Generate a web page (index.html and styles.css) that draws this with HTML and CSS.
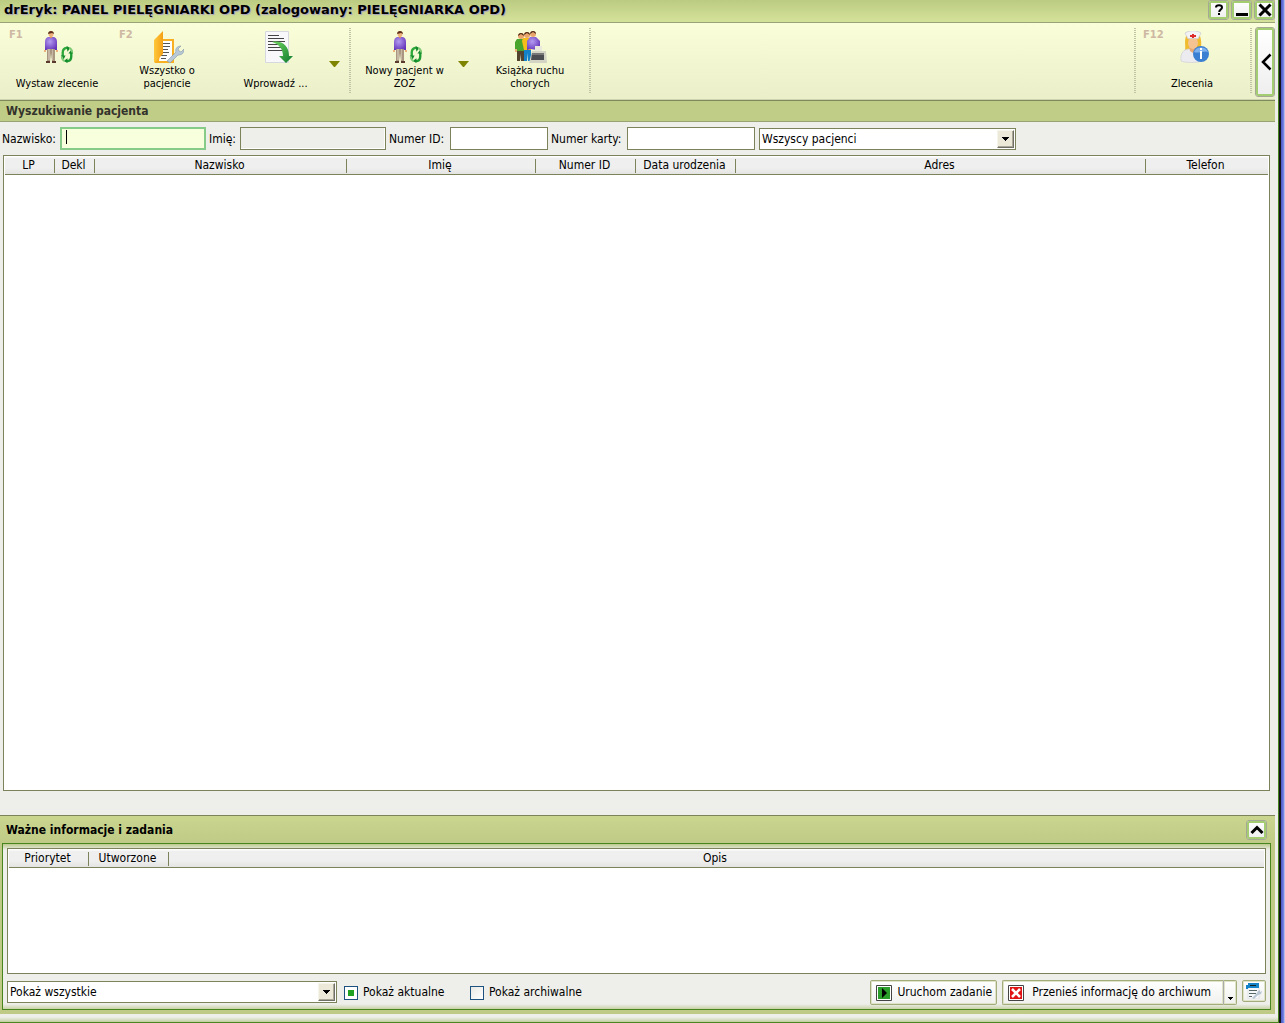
FILE: index.html
```html
<!DOCTYPE html>
<html lang="pl">
<head>
<meta charset="utf-8">
<title>drEryk: PANEL PIELĘGNIARKI OPD</title>
<link rel="stylesheet" href="styles.css">
</head>
<body>
<svg class="defs" aria-hidden="true">
  <defs>
    <radialGradient id="shirt" cx=".4" cy=".35" r=".7"><stop offset="0" stop-color="#b49cf0"/><stop offset="1" stop-color="#6536bc"/></radialGradient>
    <linearGradient id="folder" x1="0" y1="0" x2="1" y2="0"><stop offset="0" stop-color="#ffc83c"/><stop offset="1" stop-color="#f5a014"/></linearGradient>
    <linearGradient id="green" x1="0" y1="0" x2="1" y2="1"><stop offset="0" stop-color="#6fd45f"/><stop offset="1" stop-color="#0d7a2e"/></linearGradient>
    <symbol id="person" viewBox="0 0 14 32">
      <path d="M3 17h8v13H8l-1-8-1 8H3z" fill="#a89680"/>
      <path d="M4 18h2v11H4zM8 18h1v11H8z" fill="#c6b8a4"/>
      <path d="M2 30h4v2H2zM8 30h4v2H8z" fill="#5a3a2e"/>
      <path d="M4 6h6q3 1 3 5v8h-2v-1H3v1H1v-8q0-4 3-5z" fill="url(#shirt)"/>
      <path d="M0 19h2v2H0zM12 19h2v2h-2z" fill="#eeb07c"/>
      <path d="M6 4h2v3H6z" fill="#d98f58"/>
      <ellipse cx="7" cy="3" rx="2.500" ry="3" fill="#eeb07c"/>
      <path d="M4 3c0-4 6-4 6 0L8 2z" fill="#5b2e18"/>
    </symbol>
    <symbol id="refresh" viewBox="0 0 13 18">
      <path d="M2 11V7c0-3 2-5 5-5" fill="none" stroke="#2fa83c" stroke-width="2.500"/>
      <path d="M11 7v4c0 3-2 5-5 5" fill="none" stroke="#1d9a32" stroke-width="2.500"/>
      <path d="M6 0l4 2-3 4zM0 10h5l-2 4zM8 8l3-4 2 4zM7 13v5l-4-2z" fill="#138a2b"/>
      <path d="M9 2c2 1 3 3 3 5" fill="none" stroke="#7ccb74" stroke-width="2"/>
      <path d="M1 11c0 2 1 4 3 5" fill="none" stroke="#7ccb74" stroke-width="2"/>
    </symbol>
  </defs>
</svg>

<div class="window">
  <header class="titlebar">
    <h1>drEryk: PANEL PIELĘGNIARKI OPD (zalogowany: PIELĘGNIARKA OPD)</h1>
    <div class="window-buttons">
      <button class="frame-button" type="button" aria-label="Pomoc"><svg width="14" height="14" viewBox="0 0 14 14"><path d="M4 4.500C4 1.500 10 1.500 10 4.500C10 6.500 7.200 6.500 7.200 9" fill="none" stroke="#000" stroke-width="2"/><path d="M6 10h2v2H6z"/></svg></button>
      <button class="frame-button" type="button" aria-label="Minimalizuj"><svg width="14" height="14" viewBox="0 0 14 14"><path d="M1 10h12v3H1z"/></svg></button>
      <button class="frame-button" type="button" aria-label="Zamknij"><svg width="14" height="14" viewBox="0 0 14 14"><path d="M1.500 1.500l11 11M12.500 1.500l-11 11" stroke="#000" stroke-width="3"/></svg></button>
    </div>
  </header>

  <nav class="toolbar">
    <button class="tool" type="button">
      <span class="hotkey">F1</span>
      <svg class="tool-icon" width="32" height="32" viewBox="0 0 32 32"><use href="#person" x="2" y="0" width="14" height="32"/><use href="#refresh" x="18" y="15" width="14" height="17"/></svg>
      <span class="tool-label">Wystaw zlecenie</span>
    </button>
    <button class="tool" type="button">
      <span class="hotkey">F2</span>
      <svg class="tool-icon" width="32" height="32" viewBox="0 0 32 32">
        <path d="M3 8h19v24H3z" fill="#f8b022"/><path d="M10 10h10v20H7z" fill="#fff"/>
        <path d="M11 12.500h7M11 15.500h7M10 18.500h6M10 21.500h7M9 24.500h6M9 27.500h5" stroke="#555" stroke-width="1"/>
        <path d="M2 9l9-9v23l-9 9z" fill="url(#folder)"/>
        <path d="M15 30l9-9c-1-3 1-6 5-6l-3 3 1 2 2 1 3-3c0 5-3 6-6 6l-8 8z" fill="#b9c9d8" stroke="#8297aa" stroke-width=".6"/>
      </svg>
      <span class="tool-label">Wszystko o pacjencie</span>
    </button>
    <button class="tool tool-split" type="button">
      <svg class="tool-icon" width="32" height="32" viewBox="0 0 32 32">
        <path d="M4.500.500h23v31h-23z" fill="#f8f8fa" stroke="#d5d8de"/>
        <path d="M7 4.500h11M7 7.500h16M7 10.500h17M7 13.500h16M7 16.500h15M7 19.500h14" stroke="#444" stroke-width="1"/>
        <path d="M11 11c10-2 17 4 17 14h4l-7 7-7-7h4c0-7-4-12-11-14z" fill="url(#green)"/>
      </svg>
      <span class="tool-label">Wprowadź ...</span>
    </button>
    <button class="drop" type="button" aria-label="Wprowadź – więcej"><svg width="11" height="6" viewBox="0 0 11 6"><path d="M0 0h11L6 6H5z" fill="#7f8400"/></svg></button>
    <span class="divider"></span>
    <button class="tool tool-split" type="button">
      <svg class="tool-icon" width="32" height="32" viewBox="0 0 32 32"><use href="#person" x="3" y="0" width="14" height="32"/><use href="#refresh" x="19" y="15" width="14" height="17"/></svg>
      <span class="tool-label">Nowy pacjent w ZOZ</span>
    </button>
    <button class="drop" type="button" aria-label="Nowy pacjent – więcej"><svg width="11" height="6" viewBox="0 0 11 6"><path d="M0 0h11L6 6H5z" fill="#7f8400"/></svg></button>
    <button class="tool tool-last" type="button">
      <svg class="tool-icon" width="32" height="32" viewBox="0 0 32 32">
        <path d="M2 19h7v11H6v-7l-1 7H2z" fill="#54432f"/><path d="M2 8h6l3 3v9H0v-9z" fill="#49a52c"/><path d="M0 18h2v3H0z" fill="#eeb07c"/>
        <circle cx="6" cy="5" r="3" fill="#e8a56c"/><path d="M3 5c0-4 6-4 6 0L6 3z" fill="#4b2918"/>
        <path d="M9 18h7v12h-3l-1-8v8H9z" fill="#1482c8"/><path d="M8 7h8v12H9l-2-9z" fill="#f6bd1a"/>
        <circle cx="12" cy="4" r="3" fill="#e8a56c"/><path d="M9 4c0-4 6-4 6 0l-3-2z" fill="#4b2918"/>
        <path d="M15 6h6l4 4v9h-2l-8-1-3 1v-9z" fill="url(#shirt)"/>
        <circle cx="18" cy="3" r="3" fill="#e8a56c"/><path d="M15 3c0-4 6-4 6 0l-3-2z" fill="#4b2918"/>
        <path d="M20 15h7v8h-7z" fill="#e9e9dc"/><path d="M17 20h14l1 12H14z" fill="#d4d4c4"/><path d="M17 22h12v7H16z" fill="#4b4d50"/><path d="M17 22h12v2H17z" fill="#777"/>
      </svg>
      <span class="tool-label">Książka ruchu chorych</span>
    </button>
    <span class="divider"></span>
    <span class="divider push"></span>
    <button class="tool tool-right" type="button">
      <span class="hotkey">F12</span>
      <svg class="tool-icon" width="32" height="32" viewBox="0 0 32 32">
        <path d="M9 5h14c2 6 1 10 1 14H8c1-4-1-8 1-14z" fill="#f0bb2c"/>
        <path d="M4 30c-1-8 3-12 8-12h6c5 0 8 4 7 12-5 2-16 2-21 0z" fill="#ececf0" stroke="#cfcfd6" stroke-width=".7"/>
        <path d="M12 15h8l-1 5-3 2-3-2z" fill="#e9a870"/><ellipse cx="16" cy="12" rx="5" ry="6" fill="#f5c291"/>
        <path d="M8 2c5-3 11-3 16 0l-3 6c-3-1-7-1-10 0z" fill="#f3f3f5" stroke="#c9c9d0" stroke-width=".7"/>
        <path d="M15 3h2v1h2v2h-2v1h-2V6h-2V4h2z" fill="#dd2b2b"/>
        <circle cx="24" cy="23" r="8" fill="#3b7fd2"/><path d="M17 21a7.500 7 0 0 1 14 0c-4-2-9 2-14 0z" fill="#7fb2ec"/>
        <path d="M23 17h2v2h-2zM23 20h2v8h-2z" fill="#fff"/>
      </svg>
      <span class="tool-label">Zlecenia</span>
    </button>
    <span class="divider"></span>
    <button class="frame-button side-button" type="button" aria-label="Zwiń panel"><svg width="12" height="18" viewBox="0 0 12 18"><path d="M10.500 1.500L3 9l7.500 7.500" fill="none" stroke="#000" stroke-width="2.500"/></svg></button>
  </nav>

  <main class="search">
    <h2 class="section-title">Wyszukiwanie pacjenta</h2>
    <form class="filters">
      <div class="field"><label class="label-surname" for="surname">Nazwisko:</label><input class="text wide focused" id="surname" type="text" value=""><span class="caret"></span></div>
      <div class="field"><label class="label-name" for="name">Imię:</label><input class="text wide" id="name" type="text" disabled></div>
      <div class="field"><label class="label-id" for="pid">Numer ID:</label><input class="text short" id="pid" type="text"></div>
      <div class="field"><label class="label-card" for="card">Numer karty:</label><input class="text medium" id="card" type="text"></div>
      <div class="combo combo-patients">
        <select aria-label="Zakres pacjentów"><option>Wszyscy pacjenci</option></select>
        <span class="combo-arrow"><svg width="7" height="4" viewBox="0 0 7 4"><path d="M0 0h7v1H6v1H5v1H4v1H3V3H2V2H1V1H0z"/></svg></span>
      </div>
    </form>
    <div class="list list-patients">
      <table>
        <colgroup><col class="c-lp"><col class="c-dekl"><col class="c-surname"><col class="c-name"><col class="c-id"><col class="c-birth"><col><col class="c-phone"></colgroup>
        <thead><tr><th>LP</th><th>Dekl</th><th>Nazwisko</th><th>Imię</th><th>Numer ID</th><th>Data urodzenia</th><th>Adres</th><th>Telefon</th></tr></thead>
      </table>
    </div>
  </main>

  <section class="tasks">
    <header class="tasks-head">
      <h2>Ważne informacje i zadania</h2>
      <button class="frame-button" type="button" aria-label="Zwiń"><svg width="14" height="14" viewBox="0 0 14 14"><path d="M1.500 10L7 4.500l5.500 5.500" fill="none" stroke="#000" stroke-width="3"/></svg></button>
    </header>
    <div class="tasks-body">
      <div class="list list-tasks">
        <table>
          <colgroup><col class="c-priority"><col class="c-created"><col></colgroup>
          <thead><tr><th>Priorytet</th><th>Utworzone</th><th>Opis</th></tr></thead>
        </table>
      </div>
      <div class="tasks-bar">
        <div class="combo combo-tasks">
          <select aria-label="Filtr zadań"><option>Pokaż wszystkie</option></select>
          <span class="combo-arrow"><svg width="7" height="4" viewBox="0 0 7 4"><path d="M0 0h7v1H6v1H5v1H4v1H3V3H2V2H1V1H0z"/></svg></span>
        </div>
        <label class="check"><input type="checkbox" checked>Pokaż aktualne</label>
        <label class="check"><input type="checkbox">Pokaż archiwalne</label>
        <div class="actions">
          <button class="action" type="button"><svg width="16" height="16" viewBox="0 0 16 16"><path d="M.5.5h15v15H.5z" fill="#fff" stroke="#444"/><path d="M2 2h12v12H2z" fill="#2a9d2a"/><path d="M6 3l5 5-5 5z"/></svg>Uruchom zadanie</button>
          <div class="split">
            <button class="action action-archive" type="button"><svg width="16" height="16" viewBox="0 0 16 16"><path d="M.5.5h15v15H.5z" fill="#fff" stroke="#444"/><path d="M2 2h12v12H2z" fill="#e01414"/><path d="M4 4l8 8M12 4l-8 8" stroke="#fff" stroke-width="2.500"/></svg>Przenieś informację do archiwum</button>
            <button class="action action-more" type="button" aria-label="Więcej"><svg width="5" height="3" viewBox="0 0 5 3"><path d="M0 0h5v1H4v1H3v1H2V2H1V1H0z"/></svg></button>
          </div>
          <button class="action action-icon" type="button" aria-label="Ustawienia listy"><svg width="16" height="16" viewBox="0 0 16 16"><path d="M2 4h11v12H2z" fill="#f6f7f9" stroke="#d3d8de" stroke-width=".6"/><path d="M0 2h2v4H0zM2 0h11v5H2z" fill="#1583c8"/><path d="M4 2h6v1H4z" fill="#122"/><path d="M3 7.500h8M3 10.500h7M3 13.500h3" stroke="#566" stroke-width="1"/><path d="M6 15l5-5 1-2 2-1v2l2-1-1 3-3 1-4 4z" fill="#b7c6d2"/></svg></button>
        </div>
      </div>
    </div>
  </section>
</div>
<div class="backdrop"></div>
</body>
</html>
```
FILE: styles.css
```css
* { box-sizing: border-box; }

body {
  margin: 0;
  min-height: 100vh;
  display: flex;
  background: #eeefea;
  color: #000;
  font: 12px/15px "DejaVu Sans Condensed", "DejaVu Sans", sans-serif;
}

h1, h2 { margin: 0; }
svg { display: block; flex: none; }
button, input, select { font: inherit; color: inherit; margin: 0; padding: 0; }
button { border: 0; background: none; }

.defs { position: absolute; width: 0; height: 0; }

.window {
  flex: 1;
  min-width: 0;
  display: flex;
  flex-direction: column;
  padding: 0 3px 8px 0;
  border-right: 1px solid #47851f;
  border-bottom: 1px solid #47851f;
  background: linear-gradient(#eeefea, #c3cfa0) bottom / 100% 5px no-repeat #eeefea;
}

.backdrop {
  width: 6px;
  border-left: 2px solid #14141c;
  background: linear-gradient(90deg, #4a58c4, #6f7fe0 60%, #d4d8f0);
}

/* title bar */
.titlebar {
  display: flex;
  justify-content: space-between;
  height: 23px;
  padding-left: 4px;
  border-bottom: 1px solid #98a376;
  background: linear-gradient(#bccb82, #d5e39a);
}
.titlebar h1 {
  font: bold 13px/20px "DejaVu Sans", sans-serif;
  text-shadow: 1px 1px 1px #a79fc0;
  white-space: nowrap;
}
.window-buttons { display: flex; gap: 2px; }

.frame-button {
  display: grid;
  place-items: center;
  width: 21px;
  height: 20px;
  border: 1px solid #a5a894;
  border-radius: 3px;
  background: linear-gradient(#fff, #eee);
  box-shadow: inset 0 0 0 2px #a4cc70;
}

/* toolbar */
.toolbar {
  display: flex;
  height: 78px;
  padding-left: 2px;
  border-bottom: 1px solid #7f8a5c;
  background: linear-gradient(#fafed9, #eaefca);
  box-shadow: inset 0 -1px #cdd3b0;
}
.tool {
  position: relative;
  display: flex;
  flex-direction: column;
  align-items: center;
  justify-content: space-between;
  width: 110px;
  height: 75px;
  padding: 8px 20px;
  font-size: 11px;
  line-height: 13px;
}
.tool-icon { margin-left: 2px; }
.tool-split { width: 107px; }
.tool-last { width: 104px; padding: 8px 16px; margin-right: 7px; }
.tool-right { width: 112px; margin-right: 2px; }
.tool-label { margin: 0 -12px; }
.hotkey {
  position: absolute;
  left: 7px;
  top: 5px;
  color: #ceb8a4;
  font: bold 10px/13px "DejaVu Sans", sans-serif;
}
.drop { width: 20px; padding: 4px 10px 0 0; }
.divider {
  width: 2px;
  height: 65px;
  margin-top: 5px;
  background: repeating-linear-gradient(#c0c4a4 0 1px, transparent 1px 2px);
}
.push { margin-left: auto; }
.side-button { width: 20px; height: 70px; margin: 4px 0 0 3px; padding-left: 2px; }

/* search */
.search { flex: 1; display: flex; flex-direction: column; }
.section-title {
  height: 21px;
  padding-left: 6px;
  border-bottom: 1px solid #98a372;
  background: #c0cd86;
  color: #33332c;
  font-size: 12px;
  line-height: 20px;
}
.filters { display: flex; gap: 3px; padding: 5px 0 5px 2px; }
.field { display: flex; align-items: center; position: relative; }
.field label { padding-top: 1px; }
.label-surname { width: 58px; }
.label-name { width: 31px; }
.label-id { width: 61px; }
.label-card { width: 76px; }
.text {
  height: 23px;
  padding: 0 4px;
  border: 1px solid #7c825a;
  background: #fff;
  outline: 0;
}
.text:disabled { background: #eeefea; box-shadow: inset -1px -1px #fff; }
.wide { width: 146px; }
.short { width: 98px; }
.medium { width: 128px; }
.focused { border: 2px solid #86cb88; background: #f8ffdc; }
.caret { position: absolute; left: 64px; top: 3px; width: 1px; height: 14px; background: #000; }

.combo { display: grid; height: 22px; margin-top: 1px; border: 1px solid #7c825a; background: #fff; }
.combo > * { grid-area: 1 / 1; }
.combo select { width: 100%; height: 20px; padding: 1px 20px 0 2px; border: 0; background: none; appearance: none; outline: 0; }
.combo-arrow {
  display: grid;
  place-items: center;
  justify-self: end;
  align-self: center;
  width: 17px;
  height: 18px;
  margin-right: 1px;
  border: 1px solid;
  border-color: #f6f5ec #706f66 #706f66 #f6f5ec;
  background: #ece9d8;
  box-shadow: inset -1px -1px #aca899;
  pointer-events: none;
}
.combo-patients { width: 257px; margin-left: 1px; }
.combo-tasks { width: 330px; margin-right: 7px; }

/* lists */
.list { padding: 0 1px; border: 1px solid #7c825a; background: #fff; }
.list-patients { flex: 1; margin: 0 5px 24px 3px; }
.list-tasks { height: 126px; }
.list table { width: 100%; border-collapse: separate; border-spacing: 0; table-layout: fixed; }
.list thead { background: linear-gradient(#fff 0 1px, #efefef 2px 12px, #e2e2e0); }
.list th {
  height: 19px;
  padding: 1px 3px 0 0;
  border-bottom: 1px solid #7c825a;
  font-weight: normal;
  line-height: 17px;
  white-space: nowrap;
  background: linear-gradient(#7c825a, #7c825a) right 3px / 1px 14px no-repeat;
}
.list th:last-child { background: none; }
.c-lp { width: 50px; }
.c-dekl { width: 40px; }
.c-surname { width: 252px; }
.c-name { width: 189px; }
.c-id, .c-birth { width: 100px; }
.c-phone { width: 122px; }
.c-priority { width: 80px; }
.c-created { width: 80px; }

/* tasks */
.tasks {
  padding: 0 4px 4px 2px;
  border-top: 1px solid #7c825a;
  background: linear-gradient(#cad68e, #bfca86 28px);
}
.tasks-head { display: flex; align-items: center; justify-content: space-between; height: 27px; padding: 0 4px; }
.tasks-head h2 { padding-top: 1px; font-size: 12px; line-height: 15px; }
.tasks-body {
  padding: 4px;
  border: 1px solid #47851f;
  background:
    linear-gradient(#bcc98c, #eeefea) top / 100% 6px no-repeat,
    linear-gradient(#eeefea, #c9d2a8) bottom / 100% 5px no-repeat,
    #eeefea;
}
.tasks-bar { display: flex; align-items: flex-start; padding-top: 6px; }
.check { display: flex; align-items: center; gap: 5px; width: 126px; height: 25px; }
.check input {
  appearance: none;
  width: 14px;
  height: 14px;
  border: 1px solid #1c5180;
  background: linear-gradient(135deg, #e8e8e4, #fff);
}
.check input:checked { background: linear-gradient(#21a121, #21a121) center / 6px 6px no-repeat #fff; }
.actions { display: flex; align-items: flex-start; gap: 5px; margin-left: auto; }
.action {
  display: flex;
  align-items: center;
  gap: 5px;
  height: 25px;
  padding: 0 4px 0 5px;
  border: 1px solid #a3ad7c;
  border-radius: 2px;
  background: linear-gradient(#fff, #f0f0ee);
  box-shadow: inset 0 0 0 1px #dfe4c8;
  white-space: nowrap;
}
.split { display: flex; }
.action-archive { gap: 8px; padding-right: 12px; border-right: 0; border-radius: 2px 0 0 2px; }
.action-more { align-items: flex-end; width: 14px; padding: 0 0 4px 4px; border-left: 1px solid #aaa; border-radius: 0 2px 2px 0; }
.action-icon { width: 24px; height: 22px; padding: 0 3px; }
```
